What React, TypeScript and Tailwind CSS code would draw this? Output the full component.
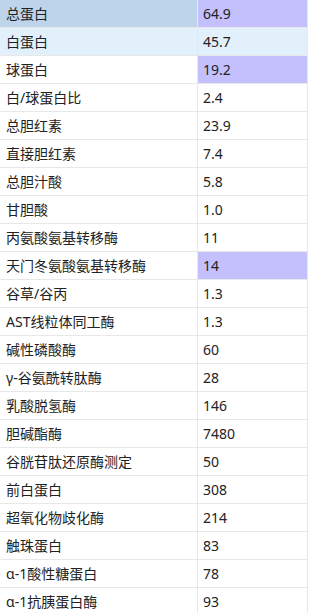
const rows: { name: string; value: string; hl?: 'sel' | 'hover' }[] = [
  { name: '总蛋白', value: '64.9', hl: 'sel' },
  { name: '白蛋白', value: '45.7', hl: 'hover' },
  { name: '球蛋白', value: '19.2' },
  { name: '白/球蛋白比', value: '2.4' },
  { name: '总胆红素', value: '23.9' },
  { name: '直接胆红素', value: '7.4' },
  { name: '总胆汁酸', value: '5.8' },
  { name: '甘胆酸', value: '1.0' },
  { name: '丙氨酸氨基转移酶', value: '11' },
  { name: '天门冬氨酸氨基转移酶', value: '14' },
  { name: '谷草/谷丙', value: '1.3' },
  { name: 'AST线粒体同工酶', value: '1.3' },
  { name: '碱性磷酸酶', value: '60' },
  { name: 'γ-谷氨酰转肽酶', value: '28' },
  { name: '乳酸脱氢酶', value: '146' },
  { name: '胆碱酯酶', value: '7480' },
  { name: '谷胱苷肽还原酶测定', value: '50' },
  { name: '前白蛋白', value: '308' },
  { name: '超氧化物歧化酶', value: '214' },
  { name: '触珠蛋白', value: '83' },
  { name: 'α-1酸性糖蛋白', value: '78' },
  { name: 'α-1抗胰蛋白酶', value: '93' },
];

// rows whose value cell is marked (lavender)
const marked = new Set(['总蛋白', '球蛋白', '天门冬氨酸氨基转移酶']);

export default function App() {
  return (
    <div className="w-[308px] border-r border-[#e8e8e8] bg-white text-[14px] text-[#222] font-['Noto_Sans','Noto_Sans_CJK_SC',sans-serif]">
      {rows.map((r) => {
        const rowBg = r.hl === 'sel' ? 'bg-[#bdd4ea]' : r.hl === 'hover' ? 'bg-[#e2f0fb]' : 'bg-white';
        return (
          <div key={r.name} className={`flex h-[28px] border-b border-[#e8e8e8] ${rowBg}`}>
            <div className="w-[198px] shrink-0 flex items-center pl-[6px] border-r border-[#e8e8e8] whitespace-nowrap">
              {r.name}
            </div>
            <div
              className={`flex-1 flex items-center pl-[5px] ${
                marked.has(r.name) ? 'bg-[#c3c0fd]' : ''
              }`}
            >
              {r.value}
            </div>
          </div>
        );
      })}
    </div>
  );
}
